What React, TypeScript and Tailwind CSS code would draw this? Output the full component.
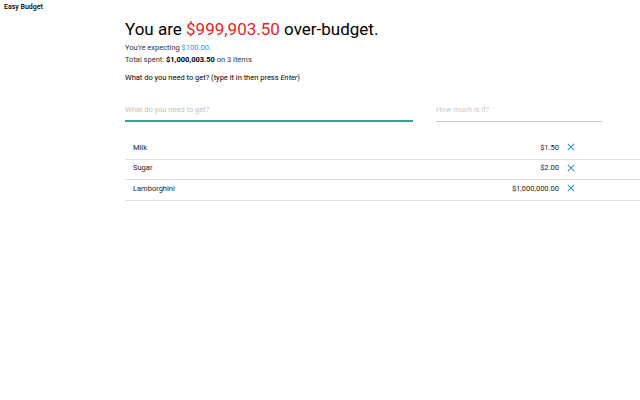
import React from "react";

const items = [
  { name: "Milk", price: "$1.50" },
  { name: "Sugar", price: "$2.00" },
  { name: "Lamborghini", price: "$1,000,000.00" },
];

function CloseIcon() {
  return (
    <svg viewBox="0 0 10 10" className="w-[8px] h-[8px]" fill="none" stroke="#2f8fd8" strokeWidth="1.3">
      <path d="M1 1 L9 9 M9 1 L1 9" />
    </svg>
  );
}

export default function App() {
  return (
    <div className="w-[640px] h-[400px] bg-white text-black font-['Roboto',sans-serif] overflow-hidden">
      {/* Header */}
      <div className="px-[4px] pt-[2px] text-[7px] leading-[10px] font-medium">Easy Budget</div>

      <div className="pl-[125px]">
        <h1 className="mt-[7px] text-[17px] leading-[20px] font-normal">
          You are <span className="text-[#e5261f]">$999,903.50</span> over-budget.
        </h1>

        <div className="mt-[3px] text-[7.5px] leading-[12px] text-[#333]">
          <div>
            You're expecting <span className="text-[#2f8fd8]">$100.00</span>.
          </div>
          <div>
            Total spent: <span className="font-bold text-black">$1,000,003.50</span> on 3 items
          </div>
        </div>

        <div className="mt-[7px] text-[7.5px] leading-[10px] text-black">
          What do you need to get? (type it in then press <em>Enter</em>)
        </div>

        {/* Inputs */}
        <div className="mt-[18px] flex gap-[23px]">
          <div className="w-[288px] border-b-[2px] border-[#3a9d96] pb-[5px] pt-[4px] text-[7.5px] leading-[10px] text-[#c2c2c2]">
            What do you need to get?
          </div>
          <div className="w-[166px] border-b border-[#c8c8c8] pb-[6px] pt-[4px] text-[7.5px] leading-[10px] text-[#c8c8c8]">
            How much is it?
          </div>
        </div>

        {/* List */}
        <div className="mt-[17px]">
          {items.map((it) => (
            <div
              key={it.name}
              className="flex items-center h-[20.5px] pb-[3px] border-b border-[#e0e0e0] pl-[8px] pr-[65px] text-[7.5px] text-[#222]"
            >
              <span className="flex-1">{it.name}</span>
              <span>{it.price}</span>
              <span className="ml-[8px] flex items-center">
                <CloseIcon />
              </span>
            </div>
          ))}
        </div>
      </div>
    </div>
  );
}
